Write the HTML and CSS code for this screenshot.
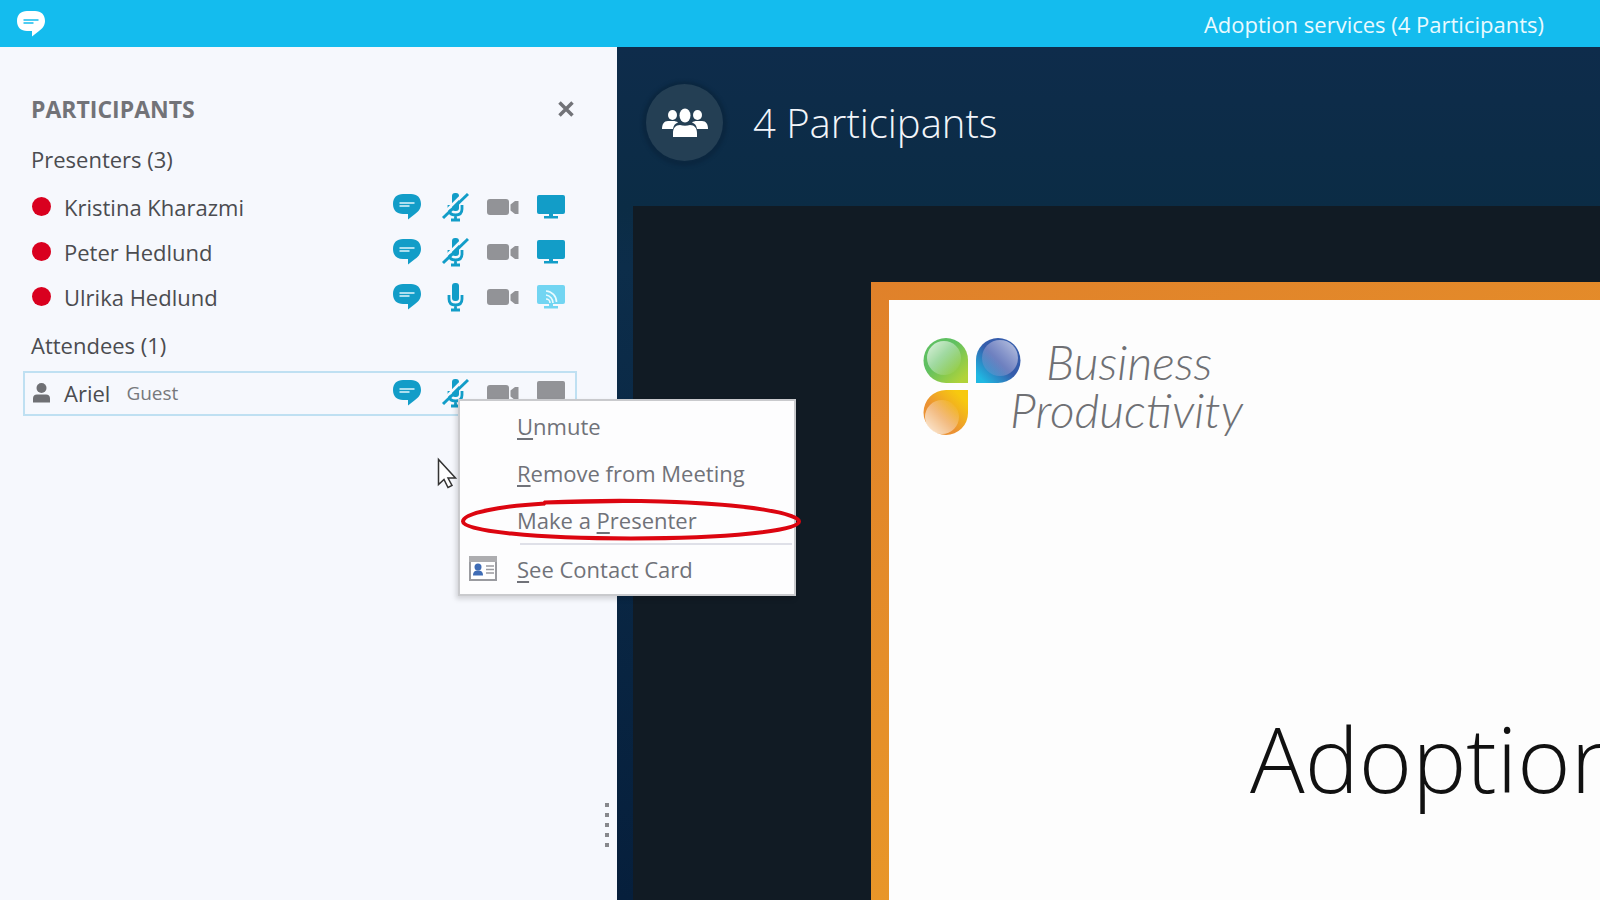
FILE: index.html
```html
<!DOCTYPE html>
<html lang="en">
<head>
<meta charset="UTF-8">
<meta name="viewport" content="width=device-width, initial-scale=1.0">
<title>Adoption services (4 Participants)</title>
<link rel="stylesheet" href="styles.css">
</head>
<body>

<!-- Shared icons -->
<svg class="sprite" aria-hidden="true">
    <symbol id="chat" viewBox="0 0 28 26">
        <path d="M10 0h8c6 0 10 3.500 10 10 0 4.500-2.500 7.500-6 10l-7 5.500V20h-5C4 20 0 16.500 0 10S4 0 10 0z" fill="currentColor"/>
        <path d="M6.500 9h15M6.500 12h10" stroke="var(--line)" stroke-width="1.300"/>
    </symbol>
    <symbol id="mic" viewBox="0 0 28 30">
        <rect x="11" y="1" width="7" height="18" rx="3" fill="currentColor"/>
        <path d="M8 13v4c0 4.500 2.500 6 6.500 6s6.500-1.500 6.500-6v-4M14.500 23v5M10 28h9" fill="none" stroke="currentColor" stroke-width="2.800"/>
    </symbol>
    <symbol id="mic-off" viewBox="0 0 28 30">
        <use href="#mic"/>
        <path d="M0 24L24 0" stroke="#f6f8fd" stroke-width="2.600"/>
        <path d="M2 26L27 2" stroke="currentColor" stroke-width="3"/>
    </symbol>
    <symbol id="camera" viewBox="0 0 32 16">
        <rect width="22" height="16" rx="3" fill="currentColor"/>
        <path d="M23.500 5.500L28 2h3.500v13H28l-4.500-3.500z" fill="currentColor"/>
    </symbol>
    <symbol id="screen" viewBox="0 0 28 24">
        <rect width="28" height="19" rx="2" fill="currentColor"/>
        <path d="M12 19h4v2h5v2.500H7V21h5z" fill="currentColor"/>
    </symbol>
    <symbol id="screen-live" viewBox="0 0 28 24">
        <use href="#screen"/>
        <path d="M9 14a4 4 0 0 1 4 4M9 10a8 8 0 0 1 7 8M9 6a11 11 0 0 1 10.500 11" fill="none" stroke="#e9fbff" stroke-width="1.600"/>
    </symbol>
</svg>

<header class="titlebar">
    <svg class="titlebar-icon" width="28" height="26"><use href="#chat"/></svg>
    <h1>Adoption services (4 Participants)</h1>
</header>

<div class="window">
    <aside class="sidebar">
        <div class="sidebar-head">
            <h2>PARTICIPANTS</h2>
            <button class="close" aria-label="Close">
                <svg width="16" height="16" viewBox="0 0 16 16"><path d="M1.500 1.500l13 13M14.500 1.500l-13 13" stroke="currentColor" stroke-width="3.500"/></svg>
            </button>
        </div>

        <section class="group">
            <h3>Presenters (3)</h3>
            <ul>
                <li class="person">
                    <span class="status"></span>
                    <span class="name">Kristina Kharazmi</span>
                    <span class="actions">
                        <button aria-label="Chat"><svg width="28" height="26"><use href="#chat"/></svg></button>
                        <button aria-label="Unmute"><svg width="28" height="30"><use href="#mic-off"/></svg></button>
                        <button class="off" aria-label="Video"><svg width="32" height="16"><use href="#camera"/></svg></button>
                        <button aria-label="Screen"><svg width="28" height="24"><use href="#screen"/></svg></button>
                    </span>
                </li>
                <li class="person">
                    <span class="status"></span>
                    <span class="name">Peter Hedlund</span>
                    <span class="actions">
                        <button aria-label="Chat"><svg width="28" height="26"><use href="#chat"/></svg></button>
                        <button aria-label="Unmute"><svg width="28" height="30"><use href="#mic-off"/></svg></button>
                        <button class="off" aria-label="Video"><svg width="32" height="16"><use href="#camera"/></svg></button>
                        <button aria-label="Screen"><svg width="28" height="24"><use href="#screen"/></svg></button>
                    </span>
                </li>
                <li class="person">
                    <span class="status"></span>
                    <span class="name">Ulrika Hedlund</span>
                    <span class="actions">
                        <button aria-label="Chat"><svg width="28" height="26"><use href="#chat"/></svg></button>
                        <button aria-label="Mute"><svg width="28" height="30"><use href="#mic"/></svg></button>
                        <button class="off" aria-label="Video"><svg width="32" height="16"><use href="#camera"/></svg></button>
                        <button class="live" aria-label="Screen"><svg width="28" height="24"><use href="#screen-live"/></svg></button>
                    </span>
                </li>
            </ul>
        </section>

        <section class="group attendees">
            <h3>Attendees (1)</h3>
            <ul>
                <li class="person selected">
                    <svg class="avatar" width="19" height="20" viewBox="0 0 19 20">
                        <circle cx="9.500" cy="5" r="5"/>
                        <path d="M1 19.500v-4c0-2.500 1.500-4 4-4h9c2.500 0 4 1.500 4 4v4z"/>
                    </svg>
                    <span class="name">Ariel</span>
                    <span class="role">Guest</span>
                    <span class="actions">
                        <button aria-label="Chat"><svg width="28" height="26"><use href="#chat"/></svg></button>
                        <button aria-label="Unmute"><svg width="28" height="30"><use href="#mic-off"/></svg></button>
                        <button class="off" aria-label="Video"><svg width="32" height="16"><use href="#camera"/></svg></button>
                        <button class="off" aria-label="Screen"><svg width="28" height="24"><use href="#screen"/></svg></button>
                    </span>

                    <div class="menu">
                        <button><span><u>U</u>nmute</span></button>
                        <button><span><u>R</u>emove from Meeting</span></button>
                        <button><span>Make a <u>P</u>resenter</span></button>
                        <hr>
                        <button>
                            <svg class="card" width="28" height="25" viewBox="0 0 28 25">
                                <rect x="1" y="1" width="26" height="23" fill="#fff" stroke="#9a9ba0" stroke-width="2"/>
                                <path d="M0 0h28v6H0z" fill="#adadb0"/>
                                <circle cx="9" cy="11" r="3.500" fill="#3f6cb5"/>
                                <path d="M4 19.500c0-4 2-5 5-5s5 1 5 5z" fill="#3f6cb5"/>
                                <path d="M17 10h8M17 13.500h8M17 17h8" stroke="#9a9ba0" stroke-width="1.300"/>
                            </svg>
                            <span><u>S</u>ee Contact Card</span>
                        </button>
                        <svg class="highlight" viewBox="0 0 340 44">
                            <path d="M82 5.500L84 3.500C120 2 170 1.500 200 2.500C290 5 338 15 338 22.500C338 32 265 39.500 170 39.500S2 32 2 22.500C2 14 40 7 84 4.500M84 3.500L162 2" fill="none" stroke="#dc0510" stroke-width="4"/>
                        </svg>
                    </div>

                    <svg class="cursor" width="20" height="31" viewBox="0 0 20 31">
                        <path d="M1.500 1.500v25l5.500-5 4 8 4-2-4-7.500h7.500z" fill="#fff" stroke="#333" stroke-width="1.500"/>
                    </svg>
                </li>
            </ul>
        </section>

        <div class="grip"><i></i><i></i><i></i><i></i><i></i></div>
    </aside>

    <main class="meeting">
        <div class="meeting-head">
            <button class="people" aria-label="Participants">
                <svg width="46" height="30" viewBox="0 0 46 30">
                    <g fill="#fff">
                        <ellipse cx="10.500" cy="7" rx="4.500" ry="5"/>
                        <ellipse cx="35.500" cy="7" rx="4.500" ry="5"/>
                        <path d="M0 21c0-5 2-8 6-8h5c2 0 4 .5 5 1.500-3 1-4.500 3-5 6.500z"/>
                        <path d="M46 21c0-5-2-8-6-8h-5c-2 0-4 .5-5 1.500 3 1 4.500 3 5 6.500z"/>
                        <ellipse cx="23" cy="7.500" rx="5.500" ry="7"/>
                        <path d="M11 29v-4c0-5 2.500-8 7-8 3 1 7 1 10 0 4.500 0 7 3 7 8v4z"/>
                    </g>
                </svg>
            </button>
            <h2>4 Participants</h2>
        </div>

        <div class="stage">
            <div class="slide">
                <div class="brand">
                    <svg class="brand-mark" width="98" height="98" viewBox="0 0 98 98">
                        <defs>
                            <linearGradient id="green" x1="0" y1="0" x2="1" y2="1"><stop offset="0.400" stop-color="#5fc061"/><stop offset="0.900" stop-color="#b1d339"/></linearGradient>
                            <linearGradient id="blue" x1="0" y1="1" x2="1" y2="0"><stop offset="0.100" stop-color="#20b8e2"/><stop offset="0.500" stop-color="#355cab"/></linearGradient>
                            <linearGradient id="orange" x1="0" y1="1" x2="1" y2="0"><stop offset="0.400" stop-color="#eb9233"/><stop offset="0.850" stop-color="#f7c90f"/></linearGradient>
                            <linearGradient id="shine-tl" x1="0" y1="0" x2="1" y2="1"><stop offset="0" stop-color="#fff" stop-opacity="0.800"/><stop offset="0.900" stop-color="#fff" stop-opacity="0"/></linearGradient>
                            <linearGradient id="shine-tr" x1="1" y1="0" x2="0" y2="1"><stop offset="0" stop-color="#fff" stop-opacity="0.700"/><stop offset="1" stop-color="#b090d0" stop-opacity="0.100"/></linearGradient>
                            <linearGradient id="shine-bl" x1="0" y1="1" x2="1" y2="0"><stop offset="0" stop-color="#fff" stop-opacity="0.850"/><stop offset="0.900" stop-color="#fff" stop-opacity="0"/></linearGradient>
                        </defs>
                        <path d="M23 0a22 22 0 0 1 22 22v23H23A22.500 22.500 0 0 1 23 0z" fill="url(#green)"/>
                        <path d="M75 0a22 22 0 0 0-22 22v23h22A22.500 22.500 0 0 0 75 0z" fill="url(#blue)"/>
                        <path d="M23 97a22 22 0 0 0 22-22V52H23A22.500 22.500 0 0 0 23 97z" fill="url(#orange)"/>
                        <circle cx="21" cy="20" r="17" fill="url(#shine-tl)"/>
                        <circle cx="77" cy="20" r="18" fill="url(#shine-tr)"/>
                        <circle cx="19" cy="79" r="17" fill="url(#shine-bl)"/>
                    </svg>
                    <p class="brand-name"><span>Business</span><span>Productivity</span></p>
                </div>
                <p class="slide-title">Adoption</p>
            </div>
        </div>
    </main>
</div>

</body>
</html>
```
FILE: styles.css
```css
* {
    box-sizing: border-box;
}

body {
    display: flex;
    flex-direction: column;
    min-height: 100vh;
    margin: 0;
    background-color: #f6f8fd;
    color: #4b4c50;
    font-family: "Open Sans", "Noto Sans", sans-serif;
    font-size: 22px;
}

h1, h2, h3, p, ul {
    margin: 0;
    padding: 0;
    font-size: inherit;
    font-weight: 400;
    list-style: none;
}

button {
    padding: 0;
    border: none;
    background: none;
    color: inherit;
    font: inherit;
    cursor: pointer;
}

svg {
    display: block;
    overflow: visible;
}

.sprite {
    position: absolute;
    width: 0;
    height: 0;
}

/* Title bar */
.titlebar {
    display: flex;
    justify-content: space-between;
    align-items: center;
    height: 47px;
    padding: 0 56px 0 17px;
    background-color: #14bcee;
    color: #e9faff;
}

.titlebar-icon {
    --line: #14bcee;
    color: #fff;
}

.window {
    display: flex;
    flex: 1;
}

/* Participant list */
.sidebar {
    --line: #e0f5fc;
    position: relative;
    z-index: 1;
    flex: 0 0 617px;
    padding: 42px 40px 0 23px;
    background-color: #f6f8fd;
}

.sidebar-head {
    display: flex;
    justify-content: space-between;
    align-items: center;
    height: 40px;
    margin-bottom: 10px;
    padding: 0 3px 0 8px;
    color: #727378;
}

.sidebar-head h2 {
    font-size: 23px;
    font-weight: 700;
}

.group {
    margin-bottom: 5px;
}

.group h3 {
    margin-bottom: 6px;
    padding-left: 8px;
    line-height: 40px;
}

.attendees h3 {
    font-weight: 500;
}

.person {
    position: relative;
    display: flex;
    align-items: center;
    height: 45px;
    padding: 0 0 2px 7px;
    border: 2px solid transparent;
}

.person.selected {
    border-color: #bfe0f2;
}

.status {
    width: 19px;
    height: 19px;
    border-radius: 50%;
    background-color: #d9001f;
}

.avatar {
    fill: #6f7074;
}

.name {
    margin-left: 13px;
}

.role {
    margin-left: 16px;
    color: #77787c;
    font-size: 19px;
}

.actions {
    display: flex;
    margin-left: auto;
    color: #129dc8;
}

.actions button {
    display: flex;
    justify-content: center;
    align-items: center;
    width: 48px;
}

.actions .off {
    color: #929397;
}

.actions .live {
    color: #72d5f2;
}

.grip {
    position: absolute;
    right: 8px;
    bottom: 53px;
    display: grid;
    gap: 6px;
}

.grip i {
    width: 4px;
    height: 4px;
    background-color: #87888c;
}

/* Context menu */
.menu {
    position: absolute;
    top: 26px;
    left: 433px;
    width: 338px;
    padding: 1px 2px 2px;
    border: 2px solid #c9cacd;
    background-color: #fdfdfe;
    box-shadow: -2px 3px 5px rgba(0, 0, 0, 0.15);
    color: #707279;
}

.menu button {
    display: flex;
    align-items: center;
    width: 100%;
    height: 47px;
    padding-left: 55px;
    white-space: nowrap;
}

.menu .card {
    margin: 0 20px 0 -48px;
}

.menu hr {
    height: 2px;
    margin: 0 0 0 58px;
    border: none;
    background-color: #dfe0e8;
}

.menu u {
    text-decoration-thickness: 2px;
    text-underline-offset: 3px;
}

.highlight {
    position: absolute;
    top: 98px;
    left: 1px;
    width: 340px;
    height: 44px;
    pointer-events: none;
}

.cursor {
    position: absolute;
    top: 85px;
    left: 412px;
}

/* Meeting area */
.meeting {
    display: flex;
    flex: 1;
    flex-direction: column;
    min-width: 0;
    padding-left: 16px;
    background: linear-gradient(#0e2c4b, #0b2c45 160px, #0c2d4a 220px, #061f3c);
}

.meeting-head {
    display: flex;
    align-items: center;
    gap: 30px;
    height: 159px;
    padding: 0 13px 8px;
    color: #f2f5fa;
}

.meeting-head h2 {
    font-size: 40px;
    font-weight: 300;
}

.people {
    display: flex;
    justify-content: center;
    align-items: center;
    width: 77px;
    height: 77px;
    border-radius: 50%;
    background-color: #243f54;
    box-shadow: 0 1px 3px 4px #0b2740;
}

.stage {
    display: flex;
    flex: 1;
    padding: 76px 0 0 238px;
    background-color: #111b24;
    overflow: hidden;
}

.slide {
    flex: 1;
    min-width: 0;
    padding: 38px 0 0 34px;
    border: solid #e8932a;
    border-width: 18px 0 0 18px;
    border-image: linear-gradient(160deg, #e0812a, #eca028) 18;
    background-color: #fdfdfd;
    overflow: hidden;
}

.brand {
    display: flex;
}

.brand-name {
    margin-left: -11px;
    color: #6f7074;
    font-family: Lato, sans-serif;
    font-size: 48px;
    font-style: italic;
    font-weight: 300;
    line-height: 48px;
}

.brand-name span {
    display: block;
}

.brand-name span:first-child {
    padding-left: 36px;
}

.slide-title {
    margin: 253px 0 0 327px;
    color: #111;
    font-size: 91px;
    font-weight: 300;
    line-height: 138px;
    white-space: nowrap;
}
```
